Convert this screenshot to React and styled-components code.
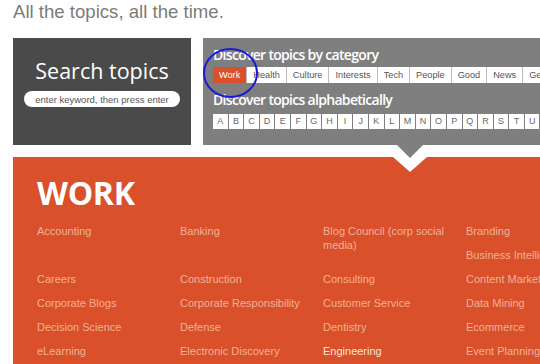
import React from 'react';
import styled, { createGlobalStyle } from 'styled-components';

const GlobalStyle = createGlobalStyle`
  html, body {
    margin: 0;
    padding: 0;
    background: #ffffff;
  }
  body {
    font-family: 'Liberation Sans', Arial, sans-serif;
  }
`;

const ORANGE = '#d9502a';

const Page = styled.div`
  width: 540px;
  height: 364px;
  overflow: hidden;
  padding-left: 13px;
  box-sizing: border-box;
`;

const Headline = styled.h1`
  margin: 0;
  padding-top: 1px;
  height: 37px;
  font-family: 'Liberation Sans', Arial, sans-serif;
  font-weight: normal;
  font-size: 18.6px;
  line-height: 22px;
  color: #7b7b7b;
`;

const TopRow = styled.div`
  display: flex;
  gap: 12px;
  height: 107px;
  width: 700px;
`;

const SearchBox = styled.div`
  width: 178px;
  background: #4a4a4a;
  display: flex;
  flex-direction: column;
  align-items: center;
  padding-top: 19px;
  box-sizing: border-box;
`;

const SearchTitle = styled.div`
  font-family: 'Open Sans', sans-serif;
  font-size: 21.5px;
  line-height: 28px;
  color: #ffffff;
`;

const SearchInput = styled.input`
  margin-top: 6px;
  width: 156px;
  height: 16px;
  border: none;
  border-radius: 8px;
  padding: 0 6px;
  box-sizing: border-box;
  font-family: 'Liberation Sans', Arial, sans-serif;
  font-size: 9.5px;
  text-align: center;
  color: #555;
  outline: none;
  &::placeholder {
    color: #555;
  }
`;

const DiscoverPanel = styled.div`
  position: relative;
  z-index: 2;
  flex: 1;
  background: #7f7f7f;
  padding: 8px 0 0 10px;
  box-sizing: border-box;
  &::after {
    content: '';
    position: absolute;
    top: 100%;
    left: 194px;
    border-left: 13px solid transparent;
    border-right: 13px solid transparent;
    border-top: 13px solid #7f7f7f;
  }
`;

const PanelTitle = styled.div`
  font-family: 'Open Sans', sans-serif;
  font-weight: 600;
  font-size: 14px;
  letter-spacing: -0.7px;
  line-height: 18px;
  color: #ffffff;
  margin-top: ${(p) => p.$gap || 0}px;
`;

const TabRow = styled.div`
  display: flex;
  margin-top: 3px;
  height: 16px;
  white-space: nowrap;
`;

const Tab = styled.div`
  height: 16px;
  line-height: 16px;
  padding: 0 6px;
  border-right: 1px solid #bdbdbd;
  background: ${(p) => (p.$active ? ORANGE : '#ffffff')};
  color: ${(p) => (p.$active ? '#ffffff' : '#555555')};
  font-size: 9.2px;
`;

const LetterRow = styled.div`
  display: flex;
  gap: 1px;
  margin-top: 5px;
  height: 15px;
`;

const Letter = styled.div`
  flex: 0 0 14.6px;
  height: 15px;
  line-height: 15px;
  background: #ffffff;
  color: #666666;
  font-size: 9px;
  text-align: center;
`;

const Highlight = styled.svg`
  position: absolute;
  left: 0;
  top: 9px;
  pointer-events: none;
`;

const TopicPanel = styled.section`
  position: relative;
  margin-top: 12px;
  background: ${ORANGE};
  height: 220px;
  padding: 16px 0 0 24px;
  box-sizing: border-box;
  &::before {
    content: '';
    position: absolute;
    top: 0;
    left: 380px;
    border-left: 17px solid transparent;
    border-right: 17px solid transparent;
    border-top: 15px solid #ffffff;
  }
`;

const TopicTitle = styled.h2`
  margin: 0;
  font-family: 'Open Sans', sans-serif;
  font-weight: 700;
  font-size: 32px;
  line-height: 40px;
  color: #ffffff;
  letter-spacing: -0.3px;
`;

const LinkGrid = styled.div`
  display: grid;
  grid-template-columns: repeat(4, 143px);
  grid-auto-rows: 24px;
  margin-top: 11px;
  width: 572px;
`;

const TopicLink = styled.a`
  font-size: 11px;
  line-height: 14px;
  color: ${(p) => (p.$hover ? '#fde3d7' : '#f2b098')};
  text-decoration: none;
  padding-right: 12px;
  grid-row: ${(p) => (p.$tall ? 'span 2' : 'auto')};
  white-space: ${(p) => (p.$tall ? 'normal' : 'nowrap')};
`;

const categories = ['Work', 'Health', 'Culture', 'Interests', 'Tech', 'People', 'Good', 'News', 'General'];
const letters = 'ABCDEFGHIJKLMNOPQRSTUVWXYZ'.split('');

const topics = [
  'Accounting', 'Banking', { t: 'Blog Council (corp social media)', tall: true }, 'Branding',
  null, null, 'Business Intelligence',
  'Careers', 'Construction', 'Consulting', 'Content Marketing',
  'Corporate Blogs', 'Corporate Responsibility', 'Customer Service', 'Data Mining',
  'Decision Science', 'Defense', 'Dentistry', 'Ecommerce',
  'eLearning', 'Electronic Discovery', { t: 'Engineering', hover: true }, 'Event Planning',
];

export default function App() {
  return (
    <>
      <GlobalStyle />
      <Page>
        <Headline>All the topics, all the time.</Headline>
        <TopRow>
          <SearchBox>
            <SearchTitle>Search topics</SearchTitle>
            <SearchInput placeholder="enter keyword, then press enter" />
          </SearchBox>
          <DiscoverPanel>
            <PanelTitle>Discover topics by category</PanelTitle>
            <TabRow>
              {categories.map((c, i) => (
                <Tab key={c} $active={i === 0}>{c}</Tab>
              ))}
            </TabRow>
            <PanelTitle $gap={8}>Discover topics alphabetically</PanelTitle>
            <LetterRow>
              {letters.map((l) => (
                <Letter key={l}>{l}</Letter>
              ))}
            </LetterRow>
            <Highlight width="60" height="54" viewBox="0 0 60 54">
              <ellipse cx="27.5" cy="26" rx="26.5" ry="24" fill="none" stroke="#1a1ad8" strokeWidth="2" />
            </Highlight>
          </DiscoverPanel>
        </TopRow>
        <TopicPanel>
          <TopicTitle>WORK</TopicTitle>
          <LinkGrid>
            {topics.map((item, i) => {
              if (item === null) return <span key={i} />;
              const t = typeof item === 'string' ? { t: item } : item;
              return (
                <TopicLink key={i} href="#" $tall={t.tall} $hover={t.hover}>
                  {t.t}
                </TopicLink>
              );
            })}
          </LinkGrid>
        </TopicPanel>
      </Page>
    </>
  );
}
